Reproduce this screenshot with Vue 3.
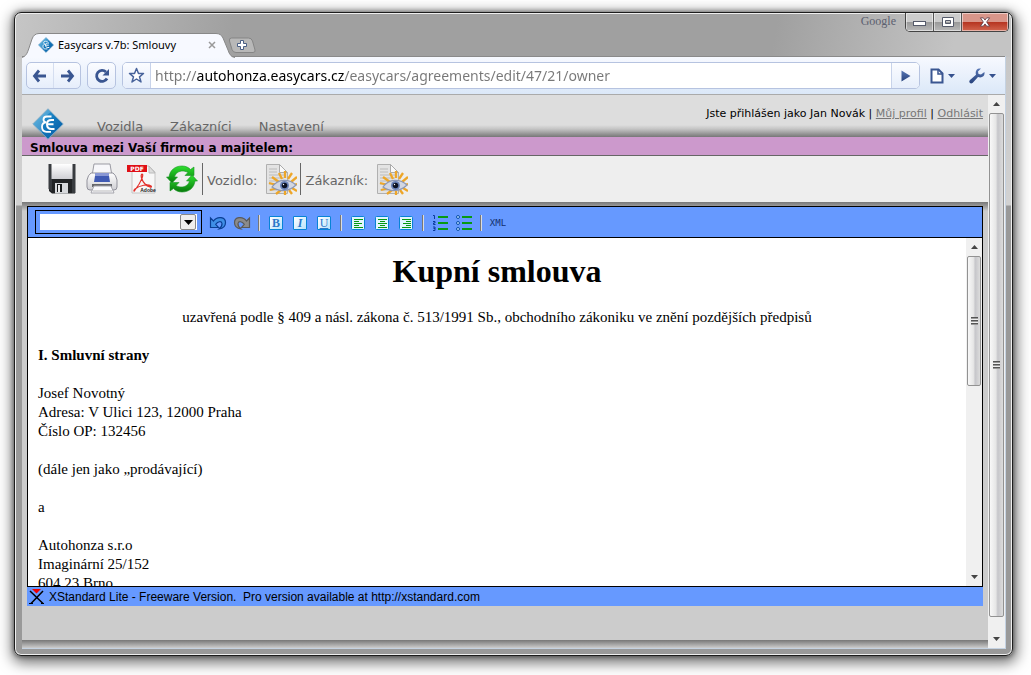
<script setup>
import { ref } from 'vue'

const url = ref('http://autohonza.easycars.cz/easycars/agreements/edit/47/21/owner')
const style = ref('')
const menu = ['Vozidla', 'Zákazníci', 'Nastavení']
const letters = [
  { glyph: 'B', label: 'Tučně', cls: 'bold' },
  { glyph: 'I', label: 'Kurzíva', cls: 'italic' },
  { glyph: 'U', label: 'Podtržení', cls: 'underline' },
]
const aligns = [
  { label: 'Zarovnat vlevo', d: 'M3 3.5h9M3 5.5h5M3 7.5h8M3 9.5h5M3 11.5h9' },
  { label: 'Zarovnat na střed', d: 'M3 3.5h9M5 5.5h5M3 7.5h9M5 9.5h5M3 11.5h9' },
  { label: 'Zarovnat vpravo', d: 'M3 3.5h9M7 5.5h5M4 7.5h8M7 9.5h5M3 11.5h9' },
]
const rays = [
  'M14 19L7 14', 'M12 22L4 20', 'M13 25L5 27', 'M16 27L11 31', 'M17 16L14 10', 'M20 15V8',
  'M23 16L27 10', 'M26 19L32 14', 'M28 22L32 21', 'M27 25L32 28', 'M24 27L27 31', 'M20 28V32',
]
</script>

<template>
  <div class="desk">
    <svg class="defs" width="0" height="0" aria-hidden="true">
      <defs>
        <linearGradient id="gem" x1="0" y1="0" x2="1" y2="1">
          <stop offset="0" stop-color="#45b4e4" /><stop offset=".5" stop-color="#1479bd" /><stop offset="1" stop-color="#0759a0" />
        </linearGradient>
        <linearGradient id="nav" x1="0" y1="0" x2="0" y2="1">
          <stop offset="0" stop-color="#5877b5" /><stop offset="1" stop-color="#27427c" />
        </linearGradient>
        <linearGradient id="silver" x1="0" y1="0" x2="0" y2="1">
          <stop offset="0" stop-color="#fff" /><stop offset="1" stop-color="#cfcfd4" />
        </linearGradient>
        <linearGradient id="green" x1="0" y1="0" x2="0" y2="1">
          <stop offset="0" stop-color="#2ee02e" /><stop offset="1" stop-color="#087a0c" />
        </linearGradient>
        <symbol id="logo" viewBox="0 0 32 32">
          <path d="M16 .8L31.2 16L16 31.2L.8 16z" fill="url(#gem)" stroke="#7aa7c4" />
          <path d="M1 16L16 1L19 4C13 7 9 16 10 25z" fill="#fff" opacity=".18" />
          <path d="M19.500 8.500h-4.500c-2 0-3.500 1-3.500 3c0 1.800 1.500 2.800 3 2.800c-2.500 0-4.500 1.500-4.500 4.500c0 3 1.500 5 4.500 5h4.500" fill="none" stroke="#fff" stroke-width="1.800" />
          <path d="M22 12h-2.500c-3 0-4.500 1.500-4.500 4.200c0 3 1.500 4.800 4.500 4.800h3M15.500 16.300h6" fill="none" stroke="#fff" stroke-width="2" />
        </symbol>
        <symbol id="preview" viewBox="0 0 32 32">
          <path d="M1.500 1.500h13l8 8v21h-21z" fill="#e3e3e3" stroke="#b0b0b0" />
          <path d="M14.500 1.500v8h8z" fill="#f9f9f9" stroke="#aaa" />
          <path d="M4 6h8M4 9h8M4 12h15M4 15h15M4 18h8M4 21h6M4 27h8" stroke="#bbb" />
          <path v-for="r in rays" :key="r" :d="r" stroke="#eda629" stroke-width="2.300" />
          <path d="M7 24C13 15.500 24 15.500 31 22C24 29 14 29 7 24z" fill="#d3d7e2" stroke="#8d98b3" stroke-width="1.200" />
          <circle cx="19.500" cy="22.500" r="4.500" fill="#6a83b8" /><circle cx="19.500" cy="22.500" r="2.800" fill="#0c1222" />
          <circle cx="18.500" cy="21.500" r=".7" fill="#fff" />
        </symbol>
        <symbol id="bend" viewBox="0 0 18 16">
          <path d="M1.500 3v9.500h8L6.700 9.300C9 6 12.500 6 13 8.500c.3 2-1 3.800-3 5.500c4-.5 6.500-3 6.500-6.500C16.500 2 8.500.5 4.500 6z" stroke-width="1.200" />
        </symbol>
      </defs>
    </svg>

    <div class="window">
      <header class="titlebar">
        <div class="tab">
          <svg class="tab-shape" width="214" height="25" viewBox="0 0 214 25" aria-hidden="true">
            <path d="M0 25C4 23 5 21 7 15L10 6Q12 .5 17 .5H194Q199 .5 201 5L206 17Q208 24 213 25z" fill="#f7f9ff" />
            <path d="M0 24.500C4 23 5 21 7 15L10 6Q12 .5 17 .5H194Q199 .5 201 5L206 17Q208 24 213 24.500" fill="none" stroke="#888" />
          </svg>
          <svg class="favicon" width="16" height="16"><use href="#logo" /></svg>
          <span class="tab-title">Easycars v.7b: Smlouvy</span>
          <button class="plain tab-close" type="button" aria-label="Zavřít kartu">
            <svg width="8" height="8" viewBox="0 0 8 8"><path d="M1 1l6 6M7 1l-6 6" stroke="#999" stroke-width="1.500" /></svg>
          </button>
        </div>
        <button class="plain new-tab" type="button" aria-label="Nová karta">
          <svg width="28" height="17" viewBox="0 0 28 17">
            <path d="M3.500 1h17q3 0 4 3l2.500 9q.6 2.500-2 2.500H8q-3 0-4-3L1.500 4Q.8 1 3.500 1z" fill="#b8b8b8" stroke="#858585" />
            <path d="M12.500 3.500h3v3h3v3h-3v3h-3v-3h-3v-3h3z" fill="#fff" stroke="#4a5f85" />
          </svg>
        </button>
        <span class="brand">Google</span>
        <div class="controls">
          <button type="button" aria-label="Minimalizovat"><svg class="low" width="13" height="6" viewBox="0 0 13 6"><rect x=".5" y=".5" width="12" height="4" fill="#fff" stroke="#555a6a" /></svg></button>
          <button type="button" aria-label="Maximalizovat"><svg width="12" height="10" viewBox="0 0 12 10"><path d="M.5.500h11v9H.5zM3.500 3.500v3h5v-3z" fill="#fff" fill-rule="evenodd" stroke="#555a6a" /></svg></button>
          <button class="close" type="button" aria-label="Zavřít"><svg width="12" height="10" viewBox="0 0 14 12"><path d="M1.500 1h3.500l2 2.700L9 1h3.500L9 6l3.500 5H9L7 8.300L5 11H1.500L5 6z" fill="#fff" stroke="#5c3540" /></svg></button>
        </div>
      </header>

      <div class="browser">
        <nav class="navbar" aria-label="Prohlížeč">
          <div class="pair">
            <button class="plain" type="button" aria-label="Zpět"><svg width="16" height="14" viewBox="0 0 16 14"><path d="M7 1.500L2.500 7l4.500 5.500M3 7H14" fill="none" stroke="#3a5691" stroke-width="2.800" /></svg></button>
            <button class="plain" type="button" aria-label="Vpřed"><svg width="16" height="14" viewBox="0 0 16 14"><path d="M9 1.500L13.500 7l-4.500 5.500M13 7H2" fill="none" stroke="#3a5691" stroke-width="2.800" /></svg></button>
          </div>
          <button class="reload" type="button" aria-label="Obnovit"><svg width="18" height="18" viewBox="0 0 18 18"><path d="M13 5A5.500 5.500 0 1 0 14 11.500" fill="none" stroke="#3a5691" stroke-width="2.800" /><path d="M16 2v6.500H9.500z" fill="#3a5691" /></svg></button>
          <form class="address" @submit.prevent>
            <button class="plain star" type="button" aria-label="Přidat záložku"><svg width="17" height="17" viewBox="0 0 17 17"><path d="M8.500 1.500l2 5h5l-4 3.300l1.500 5.200l-4.500-3l-4.500 3l1.500-5.200l-4-3.300h5z" fill="#fff" stroke="#48639b" stroke-width="1.500" stroke-linejoin="round" /></svg></button>
            <input v-model="url" type="text" aria-label="Adresa" spellcheck="false" />
            <button class="plain go" type="submit" aria-label="Přejít"><svg width="10" height="12" viewBox="0 0 10 12"><path d="M.5.500l9 5.500l-9 5.500z" fill="url(#nav)" /></svg></button>
          </form>
          <button class="plain page-menu" type="button" aria-label="Stránka"><svg width="25" height="16" viewBox="0 0 25 16"><path d="M1.500 1.500h7l4 4v9h-11z" fill="#fff" stroke="#3a5691" stroke-width="2" /><path d="M8 1v5h5" fill="none" stroke="#3a5691" stroke-width="1.500" /><path d="M18 6h7l-3.500 4z" fill="#35518e" /></svg></button>
          <button class="plain tool-menu" type="button" aria-label="Nástroje"><svg width="27" height="16" viewBox="0 0 27 16"><path d="M12 .6L9 3.500l.5 2.500l2.500.5L15.400 4C16.300 8 13 10.500 9 9L3.800 14.800Q2 16 .8 14.800Q-.3 13.500 1 12L7 6.700C5.800 3 8-.5 12 .6z" fill="url(#nav)" /><path d="M20 6h7l-3.500 4z" fill="#35518e" /></svg></button>
        </nav>

        <div class="viewport">
          <div class="page">
            <div class="site-head">
              <a class="logo" href="#" aria-label="Easycars"><svg width="32" height="32"><use href="#logo" /></svg></a>
              <nav class="menu"><a v-for="m in menu" :key="m" href="#">{{ m }}</a></nav>
              <p class="user">Jste přihlášen jako Jan Novák | <a href="#">Můj profil</a> | <a href="#">Odhlásit</a></p>
            </div>
            <h2 class="heading">Smlouva mezi Vaší firmou a majitelem:</h2>
            <div class="actions">
              <button class="plain" type="button" aria-label="Uložit">
                <svg width="30" height="32" viewBox="0 0 30 32">
                  <path d="M2 1h26v29.500H5L2 28z" fill="#222426" /><path d="M1.500 1H5v27L1.500 26zM25 1h3.500v29H25z" fill="#383b3f" />
                  <rect x="4.500" y="1" width="21" height="15" fill="url(#silver)" /><path d="M8 20h13v10.500H8z" fill="#d7d9dc" /><path d="M10 21h5v8h-5z" fill="#17191b" /><path d="M11 22h2v7h-2z" fill="#eee" />
                </svg>
              </button>
              <button class="plain" type="button" aria-label="Vytisknout">
                <svg width="32" height="32" viewBox="0 0 32 32">
                  <path d="M8 1h16l2 12H6z" fill="#f7f7fa" stroke="#9b9ba3" /><path d="M5 10h22q3 2 4 7v7q0 3-3 3H4q-3 0-3-3v-7q1-5 4-7z" fill="url(#silver)" stroke="#91919b" />
                  <path d="M9 10h14v3H9z" fill="#8997d4" /><path d="M9 13h14l1 6H8z" fill="#405ab4" /><path d="M6 21h20v3H6z" fill="#66676c" /><path d="M8 23h17l3 7H5z" fill="#f9f9fc" stroke="#a5a5ac" /><path d="M7 28h19" stroke="#bbb" />
                </svg>
              </button>
              <button class="plain" type="button" aria-label="Export do PDF">
                <svg width="32" height="32" viewBox="0 0 32 32">
                  <path d="M6 3h17l6 6v21H6z" fill="#f7f7f7" stroke="#c4c4c4" /><path d="M23 3v7h6z" fill="#ddd" stroke="#bbb" /><path d="M1 2h20v7H1z" fill="#df0f16" />
                  <text x="11" y="8" text-anchor="middle" font-family="DejaVu Sans" font-size="6" font-weight="bold" fill="#fff">PDF</text>
                  <path d="M16 11c2 0 0 7-7 16c-1 2-2 1 0-1c5-4 13-5 16-3c2 2-3 1-6-2c-3-3-5-9-3-10z" fill="none" stroke="#e3312c" stroke-width="1.200" />
                  <text x="22" y="29" text-anchor="middle" font-family="Liberation Sans" font-size="5" font-weight="bold" fill="#222">Adobe</text>
                </svg>
              </button>
              <button class="plain" type="button" aria-label="Obnovit">
                <svg width="32" height="32" viewBox="0 0 32 32">
                  <path d="M3 14C4 7 9 3 16 3c4 0 6.500 1.500 8.500 3.500L28 4v8.500H19l3-3C17 6.500 10 8 8.500 14H11.500L6 20L.5 14z" fill="url(#green)" stroke="#169421" stroke-width=".6" />
                  <path d="M29 18C28 25 23 29 16 29c-4 0-6.500-1.500-8.500-3.500L4 28v-8.500H13l-3 3C15 25.500 22 24 23.500 18H20.500L26 12L31.500 18z" fill="url(#green)" stroke="#169421" stroke-width=".6" />
                </svg>
              </button>
              <span class="rule"></span>
              <span class="caption">Vozidlo:</span>
              <button class="plain view" type="button" aria-label="Náhled vozidla"><svg width="32" height="32"><use href="#preview" /></svg></button>
              <span class="rule"></span>
              <span class="caption">Zákazník:</span>
              <button class="plain view" type="button" aria-label="Náhled zákazníka"><svg width="32" height="32"><use href="#preview" /></svg></button>
            </div>

            <main class="work">
              <div class="editor">
                <div class="tools">
                  <div class="picker">
                    <select v-model="style" aria-label="Styl"><option value=""></option><option value="h1">Nadpis</option></select>
                    <span class="arrow"><svg width="9" height="5" viewBox="0 0 9 5"><path d="M0 0h9L4.500 5z" /></svg></span>
                  </div>
                  <button class="plain tool" type="button" aria-label="Zpět"><svg width="18" height="16" fill="#3f8fe6" stroke="#0b3f94"><use href="#bend" /></svg></button>
                  <button class="plain tool redo" type="button" aria-label="Znovu"><svg width="18" height="16" fill="#8b8b8b" stroke="#5a5a5a"><use href="#bend" /></svg></button>
                  <span class="split"></span>
                  <button v-for="l in letters" :key="l.glyph" class="plain tool" type="button" :aria-label="l.label"><span class="tile" :class="l.cls">{{ l.glyph }}</span></button>
                  <span class="split"></span>
                  <button v-for="a in aligns" :key="a.label" class="plain tool" type="button" :aria-label="a.label">
                    <svg width="14" height="14" viewBox="0 0 14 14"><rect x=".5" y=".5" width="13" height="13" rx="1" fill="#e2f5ff" stroke="#0783d6" /><path :d="a.d" stroke="#079a12" /></svg>
                  </button>
                  <span class="split"></span>
                  <button class="plain tool" type="button" aria-label="Číslovaný seznam">
                    <svg width="16" height="16" viewBox="0 0 16 16"><path d="M6 2h10M6 8h10M6 14h10" stroke="#079a12" stroke-width="2" /><path d="M1 .5h1.500V4M1 6.500h2v1.500H1.500v1.500H3.500M1 12h2v3.500H1M1.500 13.500H3" fill="none" stroke="#0b3b9c" /></svg>
                  </button>
                  <button class="plain tool" type="button" aria-label="Seznam s odrážkami">
                    <svg width="16" height="16" viewBox="0 0 16 16"><path d="M6 2h10M6 8h10M6 14h10" stroke="#079a12" stroke-width="2" /><g fill="#b9dcff" stroke="#0b4fa8"><circle cx="2" cy="2" r="1.500" /><circle cx="2" cy="8" r="1.500" /><circle cx="2" cy="14" r="1.500" /></g></svg>
                  </button>
                  <span class="split"></span>
                  <button class="plain tool xml" type="button">XML</button>
                </div>
                <div class="canvas">
                  <article class="doc">
                    <h1>Kupní smlouva</h1>
                    <p class="center">uzavřená podle § 409 a násl. zákona č. 513/1991 Sb., obchodního zákoniku ve znění pozdějších předpisů</p>
                    <p><strong>I. Smluvní strany</strong></p>
                    <p>Josef Novotný<br />Adresa: V Ulici 123, 12000 Praha<br />Číslo OP: 132456</p>
                    <p>(dále jen jako „prodávající)</p>
                    <p>a</p>
                    <p>Autohonza s.r.o<br />Imaginární 25/152<br />604 23 Brno</p>
                  </article>
                  <div class="scroll inner">
                    <span class="cap"><svg width="7" height="4" viewBox="0 0 7 4"><path d="M0 4h7L3.500 0z" fill="#444" /></svg></span>
                    <span class="thumb"><i></i></span>
                    <span class="track"></span>
                    <span class="cap"><svg width="7" height="4" viewBox="0 0 7 4"><path d="M0 0h7L3.500 4z" fill="#444" /></svg></span>
                  </div>
                </div>
              </div>
              <div class="status">
                <svg width="16" height="16" viewBox="0 0 16 16"><path d="M3 0h9L7.500 4.500z" fill="#f00000" /><path d="M1 2l13 12.500M14 2L2 14.500" stroke="#000" stroke-width="1.500" /><path d="M0 14.500h4M12 14.500h3" stroke="#000" /></svg>
                <span>XStandard Lite - Freeware Version.&nbsp; Pro version available at http://xstandard.com</span>
              </div>
            </main>
            <div class="foot"></div>
          </div>
          <div class="scroll outer">
            <span class="cap"><svg width="7" height="4" viewBox="0 0 7 4"><path d="M0 4h7L3.500 0z" fill="#444" /></svg></span>
            <span class="thumb"><i></i></span>
            <span class="track"></span>
            <span class="cap"><svg width="7" height="4" viewBox="0 0 7 4"><path d="M0 0h7L3.500 4z" fill="#444" /></svg></span>
          </div>
        </div>
      </div>
    </div>
  </div>
</template>

<style>
body { margin: 0; background: #fff; }
</style>

<style scoped>
* { box-sizing: border-box; }
svg { display: block; flex: none; }
.defs { position: absolute; }
.desk { height: 100vh; min-height: 480px; padding: 12px 18px 19px 14px; display: flex; font: 13px/16px "DejaVu Sans", sans-serif; color: #000; }
.plain { border: 0; background: none; padding: 0; display: flex; align-items: center; justify-content: center; color: inherit; }
.window { flex: 1; min-width: 0; display: flex; flex-direction: column; border: 1px solid #1c1c1c; border-radius: 7px;
  background: linear-gradient(100deg, #c6c6c6 0, #a0a0a0 22%, #a0a0a0 76%, #c4c4c4 94%) top / 100% 44px no-repeat, linear-gradient(#c4c4c4 0, #d2d2d2 192px, #999 193px);
  box-shadow: inset 0 0 0 1px #eee, 0 0 4px 1px rgba(0, 0, 0, .4), 1px 4px 14px 3px rgba(0, 0, 0, .55); }
.titlebar { flex: none; height: 43px; display: flex; align-items: flex-start; padding: 0 3px 0 7px; }
.tab { position: relative; width: 206px; height: 24px; margin-top: 20px; padding: 0 10px 0 16px; display: flex; align-items: center; }
.tab-shape { position: absolute; left: 0; top: 0; }
.favicon { position: relative; margin-right: 4px; }
.tab-title { position: relative; flex: 1; font: 11px/16px "Noto Sans", sans-serif; white-space: nowrap; }
.tab-close { position: relative; width: 12px; height: 16px; }
.new-tab { margin-top: 24px; }
.brand { margin: 0 9px 0 auto; font: 12px/16px "Liberation Serif", serif; color: #5c6070; }
.controls { display: flex; height: 19px; border: 1px solid #444; border-top: 0; border-radius: 0 0 5px 5px; overflow: hidden; }
.controls button { width: 28px; padding: 0; border: 0; border-right: 1px solid #555; display: flex; align-items: center; justify-content: center; background: linear-gradient(#ccc 50%, #999 50%, #b9b9b9); box-shadow: inset 0 0 0 1px rgba(255, 255, 255, .5); }
.controls .low { margin-top: 4px; }
.controls .close { width: 46px; border-right: 0; background: linear-gradient(#d9968a 48%, #b53420 50%, #d2654f); }

.browser { flex: 1; min-height: 0; margin: 0 6px 6px 7px; display: flex; flex-direction: column; border-right: 1px solid #c4d2e2; border-bottom: 1px solid #c4d2e2; }
.navbar { flex: none; height: 39px; display: flex; align-items: center; padding: 0 9px 0 4px; border-top: 1px solid #8a8a8a; border-bottom: 1px solid #aaa; background: linear-gradient(#f7f9ff, #dbe8f8); }
.pair, .reload, .address { height: 27px; border: 1px solid #b6c3e0; border-radius: 5px; display: flex; background: linear-gradient(#fbfcff, #e6eefb); }
.pair { width: 55px; margin-right: 6px; }
.pair button { flex: 1; }
.pair button + button { border-left: 1px solid #d5def0; }
.reload { width: 29px; margin-right: 6px; padding: 0; align-items: center; justify-content: center; }
.address { flex: 1; min-width: 0; overflow: hidden; margin: 0 10px 0 0; background: #fff; }
.star, .go { flex: none; width: 28px; background: linear-gradient(#fbfcff, #e6eefb); border-right: 1px solid #c8d3ea; }
.go { border-right: 0; border-left: 1px solid #c8d3ea; }
.address input { flex: 1; min-width: 0; border: 0; outline: 0; margin: 0 4px; padding: 0; font: 14px/25px "Noto Sans", sans-serif; color: #777; -webkit-text-fill-color: transparent; background: linear-gradient(90deg, #777 42px, #000 42px, #000 189px, #777 189px); -webkit-background-clip: text; background-clip: text; }
.page-menu { margin-right: 14px; }

.viewport { flex: 1; min-height: 0; display: flex; }
.page { flex: 1; min-width: 0; display: flex; flex-direction: column; background: #ccc; }
.site-head { flex: none; height: 42px; display: flex; padding: 0 5px 0 10px; background: linear-gradient(#ddd 30px, #c4c4c4 34px, #777); }
.logo { position: relative; margin-top: 13px; height: 32px; }
.menu { display: flex; gap: 27px; margin: 24px 0 0 33px; }
.menu a { color: #666; text-decoration: none; }
.user { margin: 11px 0 0 auto; font-size: 11px; white-space: nowrap; }
.user a { color: #777; }
.heading { flex: none; margin: 0; height: 19px; padding: 3px 8px 0; font-size: 12px; line-height: 16px; white-space: nowrap; background: #c9c; border-bottom: 1px solid #666; }
.actions { flex: none; height: 46px; padding-left: 20px; display: flex; align-items: center; background: #eee; color: #666; }
.actions button { width: 40px; height: 32px; }
.actions .rule { width: 1px; height: 32px; background: #666; }
.actions .caption { margin: 4px 0 0 4px; }
.actions .view { width: 32px; margin: 0 3px 0 8px; }
.work { flex: 1; min-height: 0; display: flex; flex-direction: column; padding: 4px 5px 34px; background: linear-gradient(#777, #999 4px, #ccc 9px); }
.editor { flex: 1; min-height: 0; display: flex; flex-direction: column; border: 1px solid #000; }
.tools { flex: none; height: 31px; padding-left: 7px; display: flex; align-items: center; background: #69f; border-bottom: 1px solid #000; }
.picker { position: relative; width: 167px; height: 24px; margin-right: 4px; padding: 3px 4px; border: 1px solid #000; }
.picker select { display: block; width: 100%; height: 16px; border: 0; border-radius: 0; padding: 0 18px 0 2px; appearance: none; background: #fff; font: 12px/16px "Liberation Sans", sans-serif; }
.arrow { position: absolute; right: 5px; top: 3px; width: 16px; height: 16px; display: flex; align-items: center; justify-content: center; border: 1px solid #888; border-radius: 2px; background: #eee; pointer-events: none; }
.tool { flex: none; width: 24px; height: 24px; padding-top: 2px; }
.redo svg { transform: scaleX(-1); }
.split { width: 2px; height: 16px; margin: 2px 4px 0; background: linear-gradient(90deg, #777 50%, #ddd 50%); }
.tile { width: 14px; height: 14px; border: 1px solid #0783d6; border-radius: 1px; background: linear-gradient(135deg, #fff, #b9e2fb); color: #2b78c9; font: bold 12px/12px "Liberation Serif", serif; text-align: center; }
.tile.italic { font-style: italic; }
.tile.underline { font-weight: normal; text-decoration: underline; }
.xml { font: 9px/10px "DejaVu Sans Mono", monospace; color: #12306e; }
.canvas { flex: 1; min-height: 0; display: flex; background: #fff; }
.doc { flex: 1; min-width: 0; overflow: hidden; padding: 0 10px; font: 15px/19px "Liberation Serif", serif; }
.doc h1 { margin: 15px 0 18px; font-size: 32px; line-height: 37px; text-align: center; }
.doc p { margin: 0 0 19px; }
.doc .center { text-align: center; }
.status { flex: none; height: 19px; display: flex; align-items: center; gap: 4px; padding-left: 2px; background: #69f; font: 12px/16px "Liberation Sans", sans-serif; white-space: nowrap; }
.foot { flex: none; height: 8px; background: linear-gradient(#777, #ccc); }

.scroll { flex: none; width: 17px; display: flex; flex-direction: column; background: #f0f0f0; }
.inner { width: 16px; }
.cap { height: 18px; display: flex; align-items: center; justify-content: center; }
.thumb { display: flex; align-items: center; justify-content: center; margin: 0 1px; border: 1px solid #929292; border-radius: 2px; background: linear-gradient(90deg, #f8f8f8, #e6e6e6 45%, #c6c6ca 60%, #dcdcdc); }
.thumb i { width: 7px; height: 8px; background: repeating-linear-gradient(#555 0 1px, #999 1px 2px, #eee 2px 3px); }
.inner .thumb { flex: 129; }
.inner .track { flex: 183; }
.outer .thumb { flex: 504; }
.outer .track { flex: 13; }
</style>
